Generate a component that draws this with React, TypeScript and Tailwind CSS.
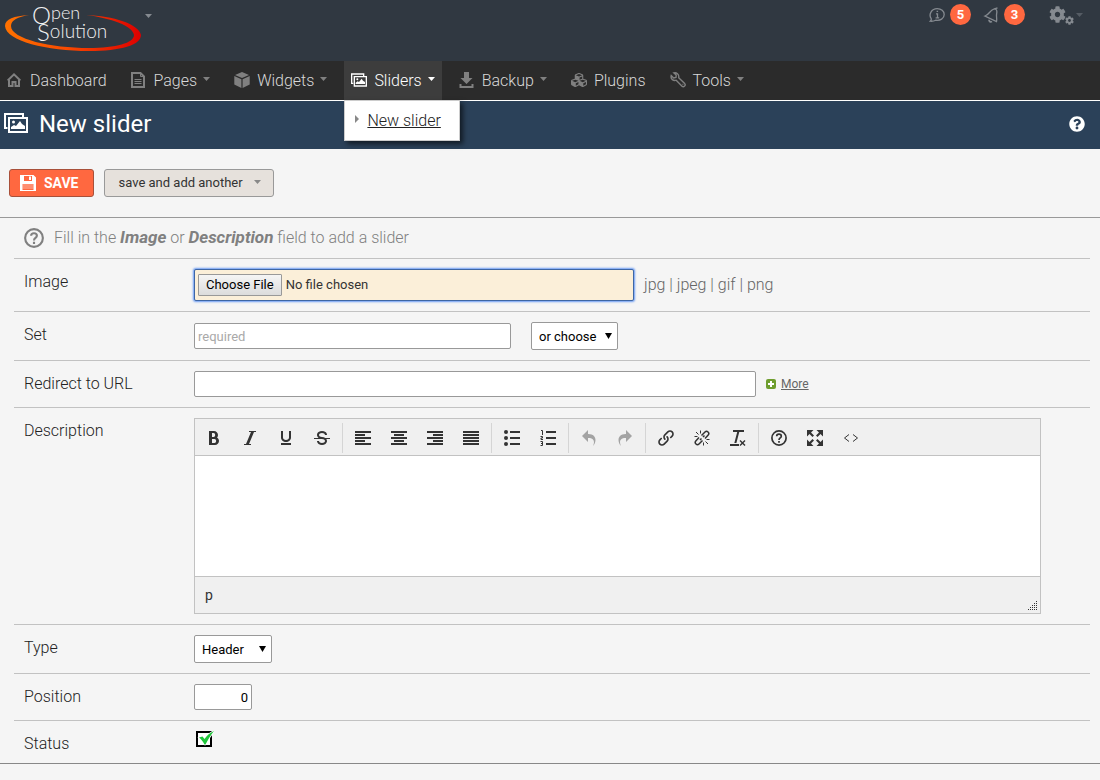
import type { ReactNode } from 'react'
import clsx from 'clsx'
import { FaCog, FaCubes, FaQuestionCircle } from 'react-icons/fa'
import {
    ImBold,
    ImClearFormatting,
    ImEnlarge,
    ImItalic,
    ImLink,
    ImRedo2,
    ImStrikethrough,
    ImUnderline,
    ImUndo2,
} from 'react-icons/im'

function Caret({ className }: { className?: string }): ReactNode {
    return (
        <svg viewBox="0 0 7 4" className={clsx('h-1 w-[7px] shrink-0 fill-current', className)} aria-hidden="true">
            <path d="M0 0h7L3.5 4z" />
        </svg>
    )
}

function Logo(): ReactNode {
    return (
        <svg viewBox="0 0 144 56" className="h-14 w-36" role="img" aria-label="Open Solution">
            <defs>
                <linearGradient id="swoosh" x1="0" x2="1" y1="0" y2="0">
                    <stop offset="0" stopColor="#ff7200" />
                    <stop offset="0.45" stopColor="#f84a00" />
                    <stop offset="1" stopColor="#dd0000" />
                </linearGradient>
            </defs>
            <path
                d="M29 15C14 16 5 19 5 26c1 15 42 25 84 25 32 0 52-6 52-16-2-11-28-19-55-20 25 3 47 11 48 20 0 8-18 13-45 13C51 48 11 39 11 26c0-6 7-9 18-11z"
                fill="url(#swoosh)"
            />
            <g fill="#f0f1f2" fontFamily="Lato, sans-serif" fontWeight="300">
                <text x="32" y="24" fontSize="24">
                    O<tspan y="19" fontSize="18">pen</tspan>
                </text>
                <text x="37" y="41" fontSize="24">
                    S<tspan y="38" fontSize="19">olution</tspan>
                </text>
            </g>
        </svg>
    )
}

function HomeIcon(): ReactNode {
    return (
        <svg viewBox="0 0 16 16" className="size-4" fill="none" stroke="currentColor" strokeWidth="2">
            <path d="M.7 8.500 7 2.300l6.300 6.200M2 8v6h3.500v-4h3v4H12V8" />
        </svg>
    )
}

function PageIcon(): ReactNode {
    return (
        <svg viewBox="0 0 16 16" className="size-4" fill="none" stroke="currentColor">
            <path d="M1 1h8.500L13 4.500V15H1z" strokeWidth="2" />
            <path d="M9.500 1v3.500H13M3.500 7.500h7M3.500 9.500h7M3.500 11.500h7" />
        </svg>
    )
}

function CubeIcon(): ReactNode {
    return (
        <svg viewBox="0 0 16 16" className="size-4 fill-current">
            <path d="M8 0l7 3-7 3-7-3zM.3 4l7.100 3.200V16L.3 12.500zM15.700 4 8.600 7.200V16l7.100-3.500z" />
        </svg>
    )
}

function SlidersIcon({ className }: { className: string }): ReactNode {
    return (
        <svg viewBox="0 0 24 20" className={className} fill="none" stroke="currentColor" strokeWidth="2">
            <path d="M3.5 15H1V1h18v3" />
            <path d="M5 5h18v14H5z" />
            <path d="M7 16v-2l3-2 2 1 4-5 2 3 3 2v3z" fill="currentColor" stroke="none" />
            <circle cx="9.5" cy="9" r="1.5" fill="currentColor" stroke="none" />
        </svg>
    )
}

function DownloadIcon(): ReactNode {
    return (
        <svg viewBox="0 0 16 16" className="size-4 fill-current">
            <path d="M5 0h5v6h3.500l-6 6-6-6H5zM.5 12h2v2h10v-2h2v4H.5z" />
        </svg>
    )
}

function WrenchIcon(): ReactNode {
    return (
        <svg viewBox="0 0 16 16" className="size-4" fill="none" stroke="currentColor" strokeWidth="1.4">
            <path d="M1.2 3.6 3.6 6 6 5.4 6.2 3 3.8.9C6.3.2 9.4 2 8.7 5.8l6 5.8c1.4 1.6-.9 4.2-2.7 2.7L6.2 8.2C3.6 9 .3 7.400 1.200 3.600z" />
            <path d="M12.500 12.500h.8" />
        </svg>
    )
}

function FloppyIcon(): ReactNode {
    return (
        <svg viewBox="0 0 16 16" className="size-4 fill-white">
            <path d="M0 0h13.500L16 2.500V16H0zM4 1v5h8V1zM2.500 9v6h11V9z" fillRule="evenodd" />
            <path d="M9 1.500h2V5H9z" />
            <path d="M2.500 9h11v5h-11z" opacity="0.25" />
        </svg>
    )
}

interface MenuItem {
    label: string
    icon: ReactNode
    hasMenu?: boolean
    active?: boolean
}

const MENU: MenuItem[] = [
    { label: 'Dashboard', icon: <HomeIcon /> },
    { label: 'Pages', icon: <PageIcon />, hasMenu: true },
    { label: 'Widgets', icon: <CubeIcon />, hasMenu: true },
    { label: 'Sliders', icon: <SlidersIcon className="h-[14px] w-4" />, hasMenu: true, active: true },
    { label: 'Backup', icon: <DownloadIcon />, hasMenu: true },
    { label: 'Plugins', icon: <FaCubes className="size-4" /> },
    { label: 'Tools', icon: <WrenchIcon />, hasMenu: true },
]

function NavItem({ item }: { item: MenuItem }): ReactNode {
    return (
        <li className="relative">
            <a
                href="#"
                className={clsx(
                    'flex h-[39px] items-center px-[7px] text-base font-light',
                    item.active ? 'bg-[#3d3d3d] text-white' : 'text-[#d8d8d8]'
                )}
            >
                <span className={clsx('mr-[7px] mb-0.5 flex w-4 justify-center', !item.active && 'text-[#808080]')}>
                    {item.icon}
                </span>
                {item.label}
                {item.hasMenu && <Caret className={clsx('mb-1 ml-1.5', !item.active && 'text-[#808080]')} />}
            </a>
            {item.active && (
                <div className="absolute top-[39px] left-0 z-10 flex h-[41px] w-[116px] items-center border border-[#ccc] bg-white pl-[10px] shadow-[3px_3px_5px_rgba(0,0,0,0.6)]">
                    <svg viewBox="0 0 4 8" className="mr-2 mb-1 h-2 w-1 fill-[#888]" aria-hidden="true">
                        <path d="M0 0l4 4-4 4z" />
                    </svg>
                    <a href="#" className="text-base font-light whitespace-nowrap text-[#222] underline">
                        New slider
                    </a>
                </div>
            )}
        </li>
    )
}

function Badge({ children }: { children: ReactNode }): ReactNode {
    return (
        <span className="flex size-[21px] items-center justify-center rounded-full bg-[#ff6840] text-[13px] font-bold text-white">
            {children}
        </span>
    )
}

function TopBar(): ReactNode {
    return (
        <header className="flex h-[61px] items-start justify-between bg-[#303841] text-[#858a90]">
            <a href="#" className="flex items-start">
                <Logo />
                <Caret className="mt-3.5 ml-px" />
            </a>
            <div className="flex items-center pt-1 pr-[17px]">
                <a href="#" aria-label="Messages" className="flex items-center gap-[5px]">
                    <svg viewBox="0 0 16 16" className="size-4" fill="none" stroke="currentColor" strokeWidth="1.3">
                        <path d="M1.200 14.200c1-1 1.300-1.700 1-2.500C-.7 7.500 2.500 1.700 8.200 1.700c4 0 7 2.500 7 5.800 0 4-4 6.500-8.500 5.700-1.500.8-3.500 1.200-5.500 1z" />
                        <path d="M7 6.800h1.500V11M6.600 10.900h3.600M7.600 4.300h1.500" />
                    </svg>
                    <Badge>5</Badge>
                </a>
                <a href="#" aria-label="Notifications" className="ml-3 flex items-center gap-[5px]">
                    <svg viewBox="0 0 16 16" className="size-4" fill="none" stroke="currentColor" strokeWidth="1.3">
                        <path d="M2 9C6.500 7.500 6.500 3.500 11 2c3-.5 3.200 2.500 2.600 5-.5 2.500.6 4.500-.1 7.500z" />
                        <path d="M11.500 1.900 14.500.8" />
                        <path d="M6 12.800c0 1.800 1.500 2.500 3 1.700" strokeWidth="1.800" />
                    </svg>
                    <Badge>3</Badge>
                </a>
                <a href="#" aria-label="Settings" className="ml-6 flex items-center">
                    <FaCog className="size-[17px]" />
                    <FaCog className="mt-3 -ml-px size-[9px]" />
                    <Caret className="ml-[2px] text-[#555c64]" />
                </a>
            </div>
        </header>
    )
}

function Row({ label, htmlFor, children }: { label: string; htmlFor: string; children: ReactNode }): ReactNode {
    return (
        <div className="flex items-start border-b border-[#c2c2c2] py-2.5 pl-2.5 last:border-b-0 last:pb-1.5">
            <label htmlFor={htmlFor} className="w-[170px] shrink-0 text-base leading-[26px] font-light text-[#222]">
                {label}
            </label>
            <div className="flex min-w-0 flex-1 items-center">{children}</div>
        </div>
    )
}

const FIELD = 'rounded-[2px] border border-[#999] bg-white px-[3px] text-[13px] text-black'

interface SelectProps {
    id: string
    label?: string
    options: string[]
    className: string
}

function Select({ id, label, options, className }: SelectProps): ReactNode {
    return (
        <span className="relative">
            <select
                id={id}
                aria-label={label}
                className={clsx(
                    'block h-7 appearance-none rounded-[2px] border border-[#999] bg-white pt-px pl-[7px] text-[13px] text-black',
                    className
                )}
            >
                {options.map((option) => (
                    <option key={option}>{option}</option>
                ))}
            </select>
            <svg viewBox="0 0 7 6" className="pointer-events-none absolute top-[11px] right-[6px] h-1.5 w-[7px]">
                <path d="M0 0h7L3.500 6z" />
            </svg>
        </span>
    )
}

function Bars({ spans }: { spans: [number, number][] }): ReactNode {
    return (
        <svg viewBox="0 0 16 16" className="size-4 fill-current">
            {spans.map(([x, width], i) => (
                <rect key={i} x={x} y={1 + i * 3} width={width} height="2" />
            ))}
        </svg>
    )
}

function BulletList(): ReactNode {
    return (
        <svg viewBox="0 0 16 16" className="size-4 fill-current">
            <path d="M6 1h10v2H6zM6 7h10v2H6zM6 13h10v2H6z" />
            <circle cx="2" cy="2" r="2" />
            <circle cx="2" cy="8" r="2" />
            <circle cx="2" cy="14" r="2" />
        </svg>
    )
}

function NumberedList(): ReactNode {
    return (
        <svg viewBox="0 0 16 16" className="size-4" fill="none" stroke="currentColor">
            <path d="M6 2h10M6 8h10M6 14h10" strokeWidth="2" />
            <path d="M1 .5h1.500V5M.5 6.500h2v1.500h-1.500v1.500h2M.5 11.500h2v4h-2M1 13.500h1.500" />
        </svg>
    )
}

function UnlinkIcon(): ReactNode {
    return (
        <svg viewBox="0 0 16 16" className="size-4" fill="none" stroke="currentColor" strokeWidth="1.5">
            <path d="M7.500 5.500 11 2c2-2 5 1 3.200 3L11 8.500M8.500 10.500 5 14c-2 2-5-1-3.200-3L5 7.500" />
            <path d="M6 10l1.500-1.500M9 7l1.500-1.500" />
            <path d="M2 2l2.500 2.500M6.500.5v3M.5 6.500h3M14 14l-2.500-2.500M9.500 15.500v-3M15.500 9.500h-3" strokeWidth="1" />
        </svg>
    )
}

function HelpIcon({ className }: { className: string }): ReactNode {
    return (
        <svg viewBox="0 0 16 16" className={className} fill="none" stroke="currentColor" strokeWidth="1.7">
            <circle cx="8" cy="8" r="7.100" />
            <path d="M5.700 6.200C5.700 3.500 10.300 3.500 10.300 6.200 10.300 8 8 7.800 8 9.900M8 11v1.700" />
        </svg>
    )
}

function CodeIcon(): ReactNode {
    return (
        <svg viewBox="0 0 16 16" className="size-4" fill="none" stroke="currentColor">
            <path d="M6 4.500 1.500 8 6 11.500M10 4.500l4.500 3.500-4.500 3.500" />
        </svg>
    )
}

interface Tool {
    title: string
    icon: ReactNode
    disabled?: boolean
}

const TOOLS: Tool[][] = [
    [
        { title: 'Bold', icon: <ImBold /> },
        { title: 'Italic', icon: <ImItalic /> },
        { title: 'Underline', icon: <ImUnderline /> },
        { title: 'Strikethrough', icon: <ImStrikethrough /> },
    ],
    [
        { title: 'Align left', icon: <Bars spans={[[0, 16], [0, 10], [0, 16], [0, 10], [0, 16]]} /> },
        { title: 'Align center', icon: <Bars spans={[[0, 16], [3, 10], [0, 16], [3, 10], [0, 16]]} /> },
        { title: 'Align right', icon: <Bars spans={[[0, 16], [6, 10], [0, 16], [6, 10], [0, 16]]} /> },
        { title: 'Justify', icon: <Bars spans={[[0, 16], [0, 16], [0, 16], [0, 16], [0, 16]]} /> },
    ],
    [
        { title: 'Bullet list', icon: <BulletList /> },
        { title: 'Numbered list', icon: <NumberedList /> },
    ],
    [
        { title: 'Undo', icon: <ImUndo2 />, disabled: true },
        { title: 'Redo', icon: <ImRedo2 />, disabled: true },
    ],
    [
        { title: 'Insert link', icon: <ImLink /> },
        { title: 'Remove link', icon: <UnlinkIcon /> },
        { title: 'Clear formatting', icon: <ImClearFormatting /> },
    ],
    [
        { title: 'Help', icon: <HelpIcon className="size-4" /> },
        { title: 'Fullscreen', icon: <ImEnlarge /> },
        { title: 'Source code', icon: <CodeIcon /> },
    ],
]

function Editor(): ReactNode {
    return (
        <div className="mr-[49px] min-w-0 flex-1 border border-[#c2c2c2] bg-[#f0f0f0]">
            <div className="flex h-9 pt-1 pl-px">
                {TOOLS.map((group, i) => (
                    <div key={i} className="mr-0.5 flex h-[30px] border-r border-[#d5d5d5] pr-0.5 last:border-r-0">
                        {group.map((tool) => (
                            <button
                                key={tool.title}
                                type="button"
                                title={tool.title}
                                disabled={tool.disabled}
                                className="flex w-9 items-center justify-center text-base text-[#333] disabled:text-[#a3a3a3]"
                            >
                                {tool.icon}
                            </button>
                        ))}
                    </div>
                ))}
            </div>
            <textarea
                id="description"
                className="block h-[122px] w-full resize-none border-y border-[#c2c2c2] bg-white p-2 text-sm outline-none"
            />
            <div className="flex h-9 items-center justify-between pr-[3px] pl-2.5 text-sm text-[#333]">
                p
                <svg viewBox="0 0 9 9" className="mb-[3px] size-[9px] self-end fill-[#333]" aria-hidden="true">
                    <path d="M8 0h1v1H8zM6 2h1v1H6zM8 2h1v1H8zM4 4h1v1H4zM6 4h1v1H6zM8 4h1v1H8zM2 6h1v1H2zM4 6h1v1H4zM6 6h1v1H6zM8 6h1v1H8zM0 8h1v1H0zM2 8h1v1H2zM4 8h1v1H4zM6 8h1v1H6zM8 8h1v1H8z" />
                </svg>
            </div>
        </div>
    )
}

export default function App(): ReactNode {
    return (
        <div className="min-h-screen bg-[#f5f5f5] font-['Roboto',sans-serif]">
            <TopBar />
            <nav className="border-b border-white bg-[#2b2b2b]">
                <ul className="flex gap-2.5">
                    {MENU.map((item) => (
                        <NavItem key={item.label} item={item} />
                    ))}
                </ul>
            </nav>
            <div className="flex h-12 items-center bg-[#2b4159] pr-[15px] pl-1 text-white">
                <SlidersIcon className="mb-1 h-5 w-6" />
                <h1 className="mb-0.5 ml-[11px] flex-1 text-2xl">New slider</h1>
                <a href="#" aria-label="Help" className="mb-0.5">
                    <FaQuestionCircle className="size-4" />
                </a>
            </div>
            <form>
                <div className="flex h-[69px] items-center gap-2.5 border-b border-[#999] pl-[9px]">
                    <button
                        type="submit"
                        className="flex h-7 items-center rounded-[3px] border border-[#a8503a] bg-[#ff6840] pr-3.5 pl-2.5 text-sm font-bold text-white"
                    >
                        <span className="mr-2">
                            <FloppyIcon />
                        </span>
                        SAVE
                    </button>
                    <button
                        type="button"
                        className="flex h-7 items-center rounded-[3px] border border-[#999] bg-[#e6e1dc] pr-3 pl-3.5 text-[13px] text-[#333]"
                    >
                        save and add another
                        <Caret className="mb-0.5 ml-[11px] text-[#888]" />
                    </button>
                </div>
                <div className="border-b border-[#888] pr-2.5 pl-3.5">
                    <p className="flex h-[41px] items-center border-b border-[#c2c2c2] pl-2.5 text-base font-light text-[#808080]">
                        <HelpIcon className="mr-2.5 size-5" />
                        <span>
                            Fill in the <strong className="text-[17px] font-bold italic">Image</strong> or{' '}
                            <strong className="text-[17px] font-bold italic">Description</strong> field to add a slider
                        </span>
                    </p>
                    <Row label="Image" htmlFor="image">
                        <input
                            id="image"
                            type="file"
                            className="h-8 w-[440px] rounded-[2px] border border-[#3e66a5] bg-[#fbefd9] px-[3px] py-1 text-[13px] text-[#333] shadow-[0_0_2px_1px_#6a9bf4] file:mr-1 file:h-[22px] file:rounded-[1px] file:border file:border-solid file:border-[#999] file:bg-linear-to-b file:from-[#f5f5f5] file:to-[#dcdcdc] file:px-[7px] file:text-[13px] file:text-black"
                        />
                        <span className="ml-2.5 text-base font-light text-[#666]">jpg | jpeg | gif | png</span>
                    </Row>
                    <Row label="Set" htmlFor="set">
                        <input
                            id="set"
                            type="text"
                            placeholder="required"
                            className={clsx(FIELD, 'mr-5 h-[26px] w-[317px] placeholder:text-[#a9a9a9]')}
                        />
                        <Select id="set-choice" label="or choose" options={['or choose']} className="w-[87px]" />
                    </Row>
                    <Row label="Redirect to URL" htmlFor="url">
                        <input id="url" type="text" className={clsx(FIELD, 'mr-2.5 h-[26px] w-[562px]')} />
                        <a href="#" className="flex items-center gap-[5px] text-xs text-[#666] underline">
                            <svg viewBox="0 0 10 10" className="size-2.5" aria-hidden="true">
                                <rect width="10" height="10" rx="2" fill="#6f9e2f" />
                                <path d="M4 2h2v2h2v2H6v2H4V6H2V4h2z" fill="#fff" />
                            </svg>
                            More
                        </a>
                    </Row>
                    <Row label="Description" htmlFor="description">
                        <Editor />
                    </Row>
                    <Row label="Type" htmlFor="type">
                        <Select id="type" options={['Header']} className="w-[78px]" />
                    </Row>
                    <Row label="Position" htmlFor="position">
                        <input
                            id="position"
                            type="text"
                            defaultValue="0"
                            className={clsx(FIELD, 'h-[26px] w-[58px] text-right')}
                        />
                    </Row>
                    <Row label="Status" htmlFor="status">
                        <span className="relative ml-0.5 size-4">
                            <input
                                id="status"
                                type="checkbox"
                                defaultChecked
                                className="peer block size-4 appearance-none border-2 border-black bg-white"
                            />
                            <svg
                                viewBox="0 0 18 16"
                                className="pointer-events-none absolute top-0 left-0 hidden h-4 w-[18px] max-w-none peer-checked:block"
                            >
                                <path
                                    d="M3 6.500 6.500 5.500 8.500 8C11 4.500 14 1.500 18 0 14.500 4.500 12 8.500 9.500 13.500H8.500C7 10.500 5.500 8.500 3 6.500z"
                                    fill="#1fc63a"
                                    stroke="#fff"
                                    strokeWidth="1.5"
                                    paintOrder="stroke"
                                />
                            </svg>
                        </span>
                    </Row>
                </div>
            </form>
        </div>
    )
}
